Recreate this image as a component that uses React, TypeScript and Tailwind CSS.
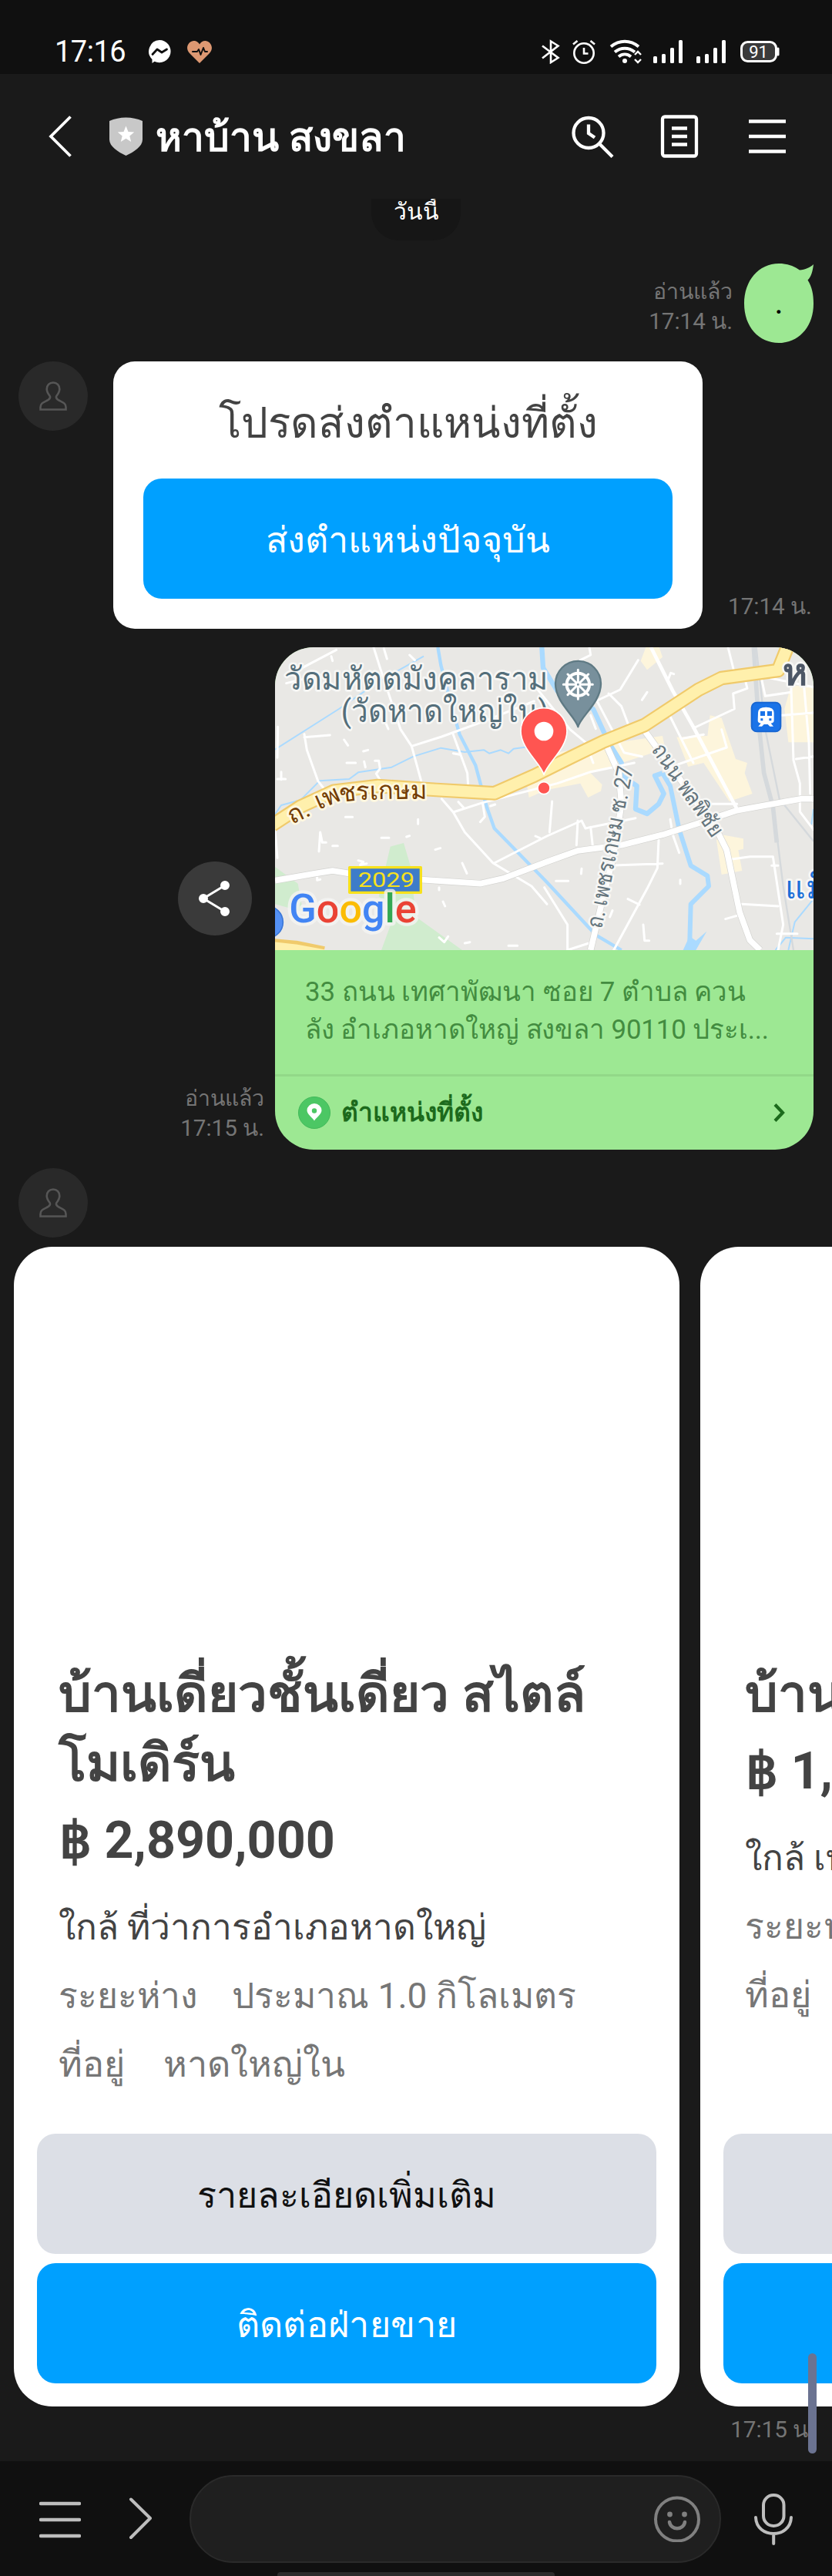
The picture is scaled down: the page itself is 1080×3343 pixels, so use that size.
import type { ReactNode } from "react";

function StatusBar() {
  return (
    <header className="flex h-[96px] items-center justify-between bg-[#101010] pt-[37px] pr-[68px] pl-[71px] text-white">
      <div className="flex items-center">
        <span className="w-[120px] text-[38px] leading-[40px] tracking-[-0.5px]">17:16</span>
        <svg className="h-8 w-8" viewBox="0 0 32 32">
          <path d="M16 1a14.6 14.6 0 1 1-6.500 27.700L6.500 31V26A14.600 14.600 0 0 1 16 1Z" fill="#fff" />
          <path d="m7 19.500 6-6.500 6 4 6.500-4" fill="none" stroke="#101010" strokeWidth="2.800" strokeLinecap="round" strokeLinejoin="round" />
        </svg>
        <svg className="ml-[19px] h-8 w-[34px]" viewBox="0 0 34 32">
          <path d="M17 31 4 18C-3 10 4 2 9.500 2c3.500 0 6 2 7.500 4.500C18.500 4 21 2 24.500 2 30 2 37 10 30 18Z" fill="#dd9872" />
          <path d="M8 16h6l2-3 2.500 7 3.500-9 2 5h3" fill="none" stroke="#101010" strokeWidth="2" strokeLinecap="round" strokeLinejoin="round" />
        </svg>
      </div>
      <svg className="h-8 w-[310px]" viewBox="0 0 310 32" fill="none" stroke="#fff" strokeWidth="2.600">
        <path d="M2 8.500 22.500 24 13 30V2.500l9.500 6L2 24.500" />
        <circle cx="56" cy="18" r="12.700" />
        <path d="M56 11v7.500h5.500M42 6.500l5.500-4.500M70 6.500 64.500 2" />
        <g strokeWidth="4">
          <path d="M91 9.500C102 .500 116 .500 127 9.500M96 16.500c8-6.500 18-6.500 26 0M101 22.500c5-4 11-4 16 0" />
        </g>
        <circle cx="109" cy="28" r="3" fill="#fff" stroke="none" />
        <path d="m122 20 4-4 4 4M122 26l4 4 4-4" strokeWidth="2.400" />
        <g fill="#fff" stroke="none">
          <rect x="146" y="22" width="5" height="9" rx="1.500" /><rect x="157" y="19" width="5" height="12" rx="1.500" /><rect x="168" y="11" width="5" height="20" rx="1.500" /><rect x="179" y="1" width="5" height="30" rx="1.500" />
          <rect x="202" y="22" width="5" height="9" rx="1.500" /><rect x="213" y="19" width="5" height="12" rx="1.500" /><rect x="224" y="11" width="5" height="20" rx="1.500" /><rect x="235" y="1" width="5" height="30" rx="1.500" />
        </g>
        <rect x="260.500" y="3.500" width="45" height="25" rx="8" fill="#3a3a3a" strokeWidth="3" />
        <path d="M308 12v8" strokeWidth="3" strokeLinecap="round" />
        <text x="282.500" y="24" textAnchor="middle" fontSize="22" fill="#fff" stroke="none">91</text>
      </svg>
    </header>
  );
}

function TitleBar() {
  return (
    <div className="flex h-[162px] items-center justify-between pr-[60px] pl-[62px] text-white">
      <div className="flex items-center">
        <svg className="h-[54px] w-8" viewBox="0 0 32 54" fill="none" stroke="#fff" strokeWidth="3.800">
          <path d="M29.500 1.500 4 27l25.500 25.500" />
        </svg>
        <svg className="ml-12 h-[50px] w-[43px]" viewBox="0 0 43 50">
          <path d="M0 5C13-1 30-1 43 5V29c0 9-11 16-21.500 21C11 45 0 38 0 29Z" fill="#c8c8c8" />
          <path d="m21.500 11.500 3 7.400 7.700.500-5.900 5 1.900 7.600-6.700-4.200-6.700 4.200 1.900-7.600-5.900-5 7.700-.500Z" fill="#fff" />
        </svg>
        <h1 className="ml-[17px] pt-[4px] text-[51.5px] leading-[60px] font-bold whitespace-nowrap">หาบ้าน สงขลา</h1>
      </div>
      <div className="flex items-center">
        <svg className="h-[60px] w-[56px]" viewBox="0 0 56 60" fill="none" stroke="#fff" strokeWidth="4.300">
          <circle cx="22" cy="25.500" r="19.500" />
          <path d="m36 39.500 17 17M22 14.500v11.500l8 5.500" />
        </svg>
        <svg className="ml-[59px] h-[60px] w-[50px]" viewBox="0 0 50 60" fill="none" stroke="#fff" strokeWidth="4.300">
          <rect x="3" y="4.500" width="44" height="51" rx="3" />
          <path d="M15 19.500h20M15 30h20M15 40.500h20" />
        </svg>
        <svg className="ml-[65px] h-[60px] w-12" viewBox="0 0 48 60" fill="none" stroke="#fff" strokeWidth="4.600">
          <path d="M0 10.500h48M0 30h48M0 49.500h48" />
        </svg>
      </div>
    </div>
  );
}

function Avatar() {
  return (
    <div className="flex h-[90px] w-[90px] shrink-0 items-center justify-center rounded-full bg-[#292929]">
      <svg className="h-[38px] w-9" viewBox="0 0 36 38" fill="none" stroke="#565656" strokeWidth="2.600">
        <path d="M18 1.500c-5 0-8.300 3.700-8.300 8.500 0 4 2 6.500 4 9 1 2-.500 4-3 5.500-6 3-9.200 4-9.200 9V36.500h33V33.500c0-5-3.200-6-9.200-9-2.500-1.500-4-3.500-3-5.500 2-2.500 4-5 4-9 0-4.800-3.300-8.500-8.300-8.500Z" />
      </svg>
    </div>
  );
}

function Meta({ read, time }: { read?: boolean; time: string }) {
  return (
    <div className="text-right text-[29.6px] leading-[38px] whitespace-nowrap text-[#757575]">
      {read && <div className="text-[28.5px]">อ่านแล้ว</div>}
      <div>{time}</div>
    </div>
  );
}

function ActionButton({ grey, children }: { grey?: boolean; children: ReactNode }) {
  return (
    <button
      className={`flex h-[156px] w-full items-center justify-center rounded-[24px] pt-[3px] leading-[60px] whitespace-nowrap ${
        grey ? "bg-[#dcdfe6] text-[46.7px] text-[#111]" : "bg-[#00a0ff] text-[46.7px] text-white"
      }`}
    >
      {children}
    </button>
  );
}

const HALO = { stroke: "#f7f7f5", strokeWidth: 16, paintOrder: "stroke" as const, strokeLinejoin: "round" as const };

function MapPreview() {
  return (
    <svg className="block h-[393px] w-[699px]" viewBox="51 30 2097 1179" fill="none" strokeLinejoin="round">
      <rect x="51" y="30" width="2097" height="1179" fill="#e9e8e5" />
      {/* parks */}
      <g fill="#d0ecce">
        <path d="M500 806 552 792 578 880 600 1080 780 1209H465L520 1060 455 1000Z" />
        <path d="M51 885 140 950 160 1060 51 1030Z" />
      </g>
      {/* commercial blocks */}
      <g fill="#fdf5dc">
        <path d="M1495 30h52l13 38-60 50-25-35ZM1150 440l130-25 280-40 10 50-290 95 45 45-5 25-50 25-30-55-130 25-70 30-10-60Z" />
        <path d="M1615 380 1735 375 1745 295 1790 305 1845 465 1890 480 1880 520 1910 600 1820 630 1720 480 1660 495Z" />
        <path d="M1790 760 1875 775 1875 815 1855 820 1870 900 1790 915 1770 780ZM2060 180 2148 180 2148 400 2050 400 2035 270Z" />
      </g>
      {/* water */}
      <g stroke="#aadaff">
        <path d="M685 30 697 100 742 270 770 370 832 490 875 650 905 735 1110 945 1300 1150 1400 1209" strokeWidth="13" />
        <path d="M1090 30 1095 110 1150 200 1290 270 1350 400 1400 480 1400 530 1460 570 1455 660 1500 678 1545 640 1565 600 1530 530 1560 520" strokeWidth="19" />
        <path d="M1560 520 1590 570 1625 740 1670 880 1735 920 1740 960 1670 1030 1665 1209" strokeWidth="18" />
        <path d="M51 428 300 270 460 160 630 65M51 680 75 645 150 625 225 550 340 543 375 517 505 497 590 455 697 422 790 438 865 430 885 443 930 430 960 443 980 425 1040 417M2148 1010 2075 1100 2050 1209M2148 1165 2040 1160 2000 1209M2148 660 2140 720" strokeWidth="6" />
      </g>
      <path d="M1640 1209 1665 1155 1690 1172 1732 1136 1690 1209Z" fill="#aadaff" />
      {/* railway */}
      <g stroke="#d5d9dc">
        <path d="M1915 30 1935 330 1955 520 1990 650 2005 790" strokeWidth="17" />
        <path d="M1925 30 1960 350 2015 620 2148 785M1990 640 2030 960 2070 1209" strokeWidth="7" />
      </g>
      {/* minor streets */}
      <g stroke="#fff" strokeWidth="9" strokeLinecap="round">
        <path d="M51 100 68 30M62 340 60 460M51 740 60 850M435 30 460 110 540 350 583 415 620 550M583 415 700 378 860 320 1060 240M165 368 175 430 218 550 245 585M165 380 265 372M745 370 800 520 803 570M700 620 745 672 790 750 900 870 1050 960 1110 1030M745 672 860 635 1150 560 1280 515 1450 480M905 870 1110 765 1245 705 1260 735 1455 695M860 640 868 690 850 710M1130 630 1120 750M100 140 290 40M95 170 260 130" />
        <path d="M1240 80 1280 60 1275 30M1465 80 1395 195 1300 240M1070 190 1200 350 1260 400 1290 480M1300 230 1410 440 1480 455M1350 210 1400 260 1430 340M1520 400 1690 640 1850 640M1590 300 1680 480M1680 345 1840 270 1835 210 1890 190 1880 150M1640 385 1720 370M1580 500 1810 420 1790 350M1815 30 1845 150M1945 150 1960 220 2060 205M1980 150 2148 185M2060 160 2070 470 2095 560 2095 670 2148 740M2110 170 2130 400 2135 600M2025 295 2148 285M2080 465 2148 455M1230 705 1225 800M1280 730 1290 820M1545 780 1540 890 1500 970 1370 1209M1350 880 1560 872M1100 965 1190 1110 1190 1209 1280 1180M1830 855 1900 845 1990 845 2030 1110 2010 1209M1870 1030 2010 1038M1805 1088 1860 1072M1425 1010 1470 1032M1985 880 2010 880M2005 1145 2085 1145M1485 1110 1490 1172 1508 1172M1590 700 1600 760 1625 830" />
        <path d="M330 480h35M398 475l5 22M440 472h15l5 30-15 20 15 25M395 435l18-5M320 390l15 22M75 515v30M60 543h32M222 825l5-75 8 40h15M275 803h20M325 691h28M465 772h30M675 818 695 812M780 870l18 40M608 700v18M375 860l20 5-12 12 25-5M563 768l12-4M690 965v10M705 1020l8 18M690 1160l20 18 15-22M790 1182l20-4M475 35l12 40M575 60l20 20M270 65l5 18M480 320l12 28M745 443 770 448M765 632l20 22M890 648l18-6M1245 892l-2 20M1145 940h48M1629 935v16M1240 240l-10 50M1480 235l20-30M1580 160l12-30 12 4M1280 295l20 52M1355 1080l10-25M1065 765l18 8M960 1192h35M225 1022l45-6M215 925v12l12-3" />
      </g>
      {/* secondary roads */}
      <g stroke="#d3d3d0" strokeWidth="27">
        <path d="M51 938 200 912 275 900 400 920 850 950 940 930 1110 865 1230 822 1400 800 1560 760 1700 715 1850 665 2100 620 2148 620" />
        <path d="M1345 420 1390 520 1400 640 1370 840 1320 1040 1280 1209M1490 355 1640 560 1780 760 1810 820 1860 1060 1900 1170 1940 1209" />
      </g>
      <g stroke="#fff" strokeWidth="23">
        <path d="M51 938 200 912 275 900 400 920 850 950 940 930 1110 865 1230 822 1400 800 1560 760 1700 715 1850 665 2100 620 2148 620" />
        <path d="M1345 420 1390 520 1400 640 1370 840 1320 1040 1280 1209M1490 355 1640 560 1780 760 1810 820 1860 1060 1900 1170 1940 1209" />
        <path d="M1515 30 1600 200 1680 340 1850 660" strokeWidth="14" />
      </g>
      {/* highway */}
      <g>
        <path d="M40 722 150 650 280 590 450 570 680 585 905 598 1060 530 1200 460 1330 397 1490 333 1700 195 1790 150 2010 120 2050 20M20 1190 130 1200 240 1222" stroke="#f0ca6b" strokeWidth="56" />
        <path d="M40 722 150 650 280 590 450 570 680 585 905 598 1060 530 1200 460 1330 397 1490 333 1700 195 1790 150 2010 120 2050 20M20 1196 130 1208 240 1228" stroke="#fff0ac" strokeWidth="43" />
      </g>
      <circle cx="20" cy="1100" r="62" fill="#5491f5" stroke="#3b78d8" strokeWidth="5" />
      {/* place labels */}
      <g fill="#546e7a" {...HALO} fontSize="122">
        <text x="88" y="196" textLength="1028" lengthAdjust="spacingAndGlyphs">วัดมหัตตมังคลาราม</text>
        <text x="308" y="322" textLength="808" lengthAdjust="spacingAndGlyphs">(วัดหาดใหญ่ใน)</text>
      </g>
      <g fill="#733c00" {...HALO} stroke="#fff8e0" fontSize="98">
        <text transform="translate(118 720) rotate(-26)">ถ.</text>
        <text transform="translate(222 664) rotate(-24)">เพ</text>
        <text transform="translate(303 632) rotate(-6)">ช</text>
        <text transform="translate(366 624) rotate(-1)">รเกษม</text>
      </g>
      <g fill="#64747c" {...HALO} fontSize="88">
        <text transform="translate(1324 1128) rotate(-79)" textLength="640" lengthAdjust="spacingAndGlyphs">ถ. เพชรเกษม ซ. 27</text>
        <text transform="translate(1514 430) rotate(55)" textLength="420" lengthAdjust="spacingAndGlyphs">ถนน พลพิชัย</text>
      </g>
      <text x="2028" y="176" fontSize="146" fontWeight="700" fill="#4d5766" {...HALO}>ห</text>
      <text x="2038" y="1008" fontSize="124" fill="#1b6fd8" {...HALO}>แม็</text>
      {/* temple marker */}
      <path d="M1231 340C1222 300 1143 245 1143 172A88 88 0 0 1 1320 172C1320 245 1240 300 1231 340Z" fill="#78909c" stroke="#5f7a84" strokeWidth="7" />
      <g stroke="#fff" strokeWidth="9" strokeLinecap="round">
        <circle cx="1231" cy="175" r="44" strokeWidth="12" />
        <path d="M1231 118v114M1174 175h114M1191 135l80 80M1271 135l-80 80" />
        <circle cx="1231" cy="175" r="8" fill="#78909c" strokeWidth="7" />
      </g>
      {/* station marker */}
      <rect x="1907" y="245" width="113" height="113" rx="20" fill="#1a73e8" stroke="#1967d2" strokeWidth="6" />
      <path d="M1932 285q0-22 31-22t31 22v30q0 10-12 11l10 12h-14l-8-8h-15l-8 8h-14l10-12q-12-1-12-11Z" fill="#fff" />
      <path d="M1941 279h18v18h-18ZM1968 279h18v18h-18ZM1942 307h9v9h-9ZM1975 307h9v9h-9Z" fill="#1a73e8" />
      {/* route shield */}
      <rect x="341" y="887" width="278" height="98" fill="#3d7cc9" stroke="#f7e11c" strokeWidth="10" />
      <text x="484" y="963" fontSize="80" fill="#f7e11c" textAnchor="middle" textLength="220" lengthAdjust="spacingAndGlyphs">2029</text>
      {/* wordmark */}
      <g fontSize="156" fontWeight="500" stroke="#f4f4f2" strokeOpacity="0.8" strokeWidth="26" paintOrder="stroke" strokeLinejoin="round">
        <text x="106" y="1101" textLength="496" lengthAdjust="spacingAndGlyphs">
          <tspan fill="#4285f4">G</tspan><tspan fill="#ea4335">o</tspan><tspan fill="#fbbc05">o</tspan><tspan fill="#4285f4">g</tspan><tspan fill="#34a853">l</tspan><tspan fill="#ea4335">e</tspan>
        </text>
      </g>
      {/* pin */}
      <path d="M1098 526C1085 480 1008 425 1008 356A90 90 0 0 1 1188 356C1188 425 1111 480 1098 526Z" fill="#ff5551" stroke="#fff" strokeWidth="5" />
      <circle cx="1098" cy="357" r="37" fill="#fff" />
      <circle cx="1098" cy="578" r="24" fill="#ff5551" stroke="#fff" strokeWidth="5" />
    </svg>
  );
}

function LocationMessage() {
  return (
    <div className="mt-6 flex h-[652px] justify-end pr-6">
      <div className="flex flex-col items-end justify-between pt-[278px] pb-[9px]">
        <div className="mr-[30px] flex h-24 w-24 items-center justify-center rounded-full bg-[#3a3a3a]">
          <svg className="h-12 w-12" viewBox="0 0 48 48" fill="#fff" stroke="#fff" strokeWidth="3">
            <path d="M37 7 9 24l28 17" fill="none" />
            <circle cx="37" cy="7" r="4.500" /><circle cx="9" cy="24" r="4.500" /><circle cx="37" cy="41" r="4.500" />
          </svg>
        </div>
        <div className="mr-[14px]"><Meta read time="17:15 น." /></div>
      </div>
      <div className="w-[699px] overflow-hidden rounded-[50px] bg-[#9de893]">
        <MapPreview />
        <p className="h-[161px] pt-[30px] pl-[39px] text-[34.800px] leading-[49px] whitespace-nowrap text-[#438c40]">
          33 ถนน เทศาพัฒนา ซอย 7 ตำบล ควน
          <br />
          <span className="tracking-[-0.12px]">ลัง อำเภอหาดใหญ่ สงขลา 90110 ประเ...</span>
        </p>
        <div className="flex h-[98px] items-center border-t-[3px] border-[#92d888] pr-[37px] pb-[2px] pl-[30px] text-[#1c6a1c]">
          <svg className="h-[42px] w-[42px]" viewBox="0 0 42 42">
            <circle cx="21" cy="21" r="20.500" fill="#4cc764" stroke="#42b95a" />
            <path d="M21 31.500C19 28 11.500 23 11.500 18a9.500 9 0 0 1 19 0C30.500 23 23 28 21 31.500Z" fill="#fff" />
            <circle cx="21" cy="18.500" r="3.200" fill="#4cc764" />
          </svg>
          <span className="ml-[14px] grow text-[33.500px] leading-[44px] font-bold">ตำแหน่งที่ตั้ง</span>
          <svg className="h-6 w-4" viewBox="0 0 16 24" fill="none" stroke="currentColor" strokeWidth="4.200">
            <path d="m3 1.500 10 10.500L3 22.500" />
          </svg>
        </div>
      </div>
    </div>
  );
}

type Listing = { title: string[]; price: string; near: string; distance: string; area: string };

const LISTINGS: Listing[] = [
  { title: ["บ้านเดี่ยวชั้นเดี่ยว สไตล์", "โมเดิร์น"], price: "฿ 2,890,000", near: "ใกล้ ที่ว่าการอำเภอหาดใหญ่", distance: "ประมาณ 1.0 กิโลเมตร", area: "หาดใหญ่ใน" },
  { title: ["บ้านเดี่ยว"], price: "฿ 1,890,000", near: "ใกล้ เทศบาล", distance: "ประมาณ", area: "หาดใหญ่" },
];

function ListingCard({ item }: { item: Listing }) {
  return (
    <article className="flex h-[1505px] w-[864px] shrink-0 flex-col rounded-[50px] bg-white px-[30px] pt-[535px] pb-[30px]">
      <div className="pl-[28px] whitespace-nowrap text-[#434343]">
        <h2 className="text-[67.200px] leading-[90px] font-bold">
          {item.title.map((line) => (
            <span key={line} className="block">{line}</span>
          ))}
        </h2>
        <p className="mt-[10px] pl-[1px] text-[66.400px] leading-[90px] font-bold">{item.price}</p>
        <p className="mt-[24px] text-[46px] leading-[89px]">{item.near}</p>
        <p className="flex gap-[44px] text-[46.200px] leading-[89px] text-[#767676]"><span>ระยะห่าง</span><span>{item.distance}</span></p>
        <p className="flex gap-[50px] text-[46.800px] leading-[89px] text-[#767676]"><span>ที่อยู่</span><span>{item.area}</span></p>
      </div>
      <div className="mt-auto flex flex-col gap-3">
        <ActionButton grey>รายละเอียดเพิ่มเติม</ActionButton>
        <ActionButton><span className="tracking-[0.4px]">ติดต่อฝ่ายขาย</span></ActionButton>
      </div>
    </article>
  );
}

function InputBar() {
  return (
    <footer className="relative flex h-[149px] items-center bg-[#101010] pr-[50px] pl-[51px]">
      <svg className="h-[50px] w-[54px]" viewBox="0 0 54 50" stroke="#bdbdbd" strokeWidth="4.600" strokeLinecap="round">
        <path d="M2 5h50M2 26h50M2 47h50" />
      </svg>
      <svg className="ml-[62px] h-[56px] w-8" viewBox="0 0 32 56" fill="none" stroke="#bdbdbd" strokeWidth="4" strokeLinecap="round" strokeLinejoin="round">
        <path d="M3 2.500 28 27 3 52" />
      </svg>
      <div className="ml-[47px] flex h-[114px] w-[690px] items-center justify-end rounded-[57px] border-2 border-[#2a2a2a] bg-[#1f1f1f] pr-[25px]">
        <svg className="h-[60px] w-[60px]" viewBox="0 0 60 60" fill="none" stroke="#808080" strokeWidth="4">
          <circle cx="30" cy="30.500" r="28" />
          <path d="M20 34c2 11 18 11 20 0" strokeWidth="4.500" strokeLinecap="round" />
          <circle cx="20.500" cy="24" r="3.400" fill="#808080" stroke="none" /><circle cx="39.500" cy="24" r="3.400" fill="#808080" stroke="none" />
        </svg>
      </div>
      <svg className="ml-[43px] h-[68px] w-[50px]" viewBox="0 0 50 68" fill="none" stroke="#bdbdbd" strokeWidth="4" strokeLinecap="round">
        <rect x="12" y="3" width="26.500" height="40" rx="13" />
        <path d="M2 32c1 28 45 28 46 0M25.200 54v12" />
      </svg>
      <div className="absolute bottom-0 left-[360px] h-[5px] w-[360px] rounded-t-[4px] bg-[#2b2b2b]" />
    </footer>
  );
}

export default function App() {
  return (
    <div className="flex h-[3343px] w-[1080px] flex-col overflow-hidden bg-[#1a1a1a] font-[Roboto,'Noto_Sans',sans-serif]">
      <StatusBar />
      <TitleBar />
      <main className="relative h-[2936px] overflow-hidden">
        <div className="mx-auto h-[54px] w-[116px] overflow-hidden rounded-b-[36px] bg-[#161616] text-center text-[30px] leading-[33px] text-white">วันนี้</div>
        <div className="mt-[30px] flex h-[103px] items-end justify-end pr-6">
          <div className="mr-[15px] pb-[9px]"><Meta read time="17:14 น." /></div>
          <div className="relative h-[103px] w-[90px]">
            <svg className="absolute inset-0 h-full w-full" viewBox="0 0 90 103" fill="#9de893">
              <path d="M45 0C56 0 65 3 72 8.500C79 8 86 5 90 1C89 10 87 17 82.500 21.500C88 30 90 40 90 52C90 82 71 103 45 103S0 82 0 52S19 0 45 0Z" />
            </svg>
            <span className="relative block pt-[20px] text-center text-[44px] leading-[60px] text-black">.</span>
          </div>
        </div>
        <div className="mt-6 flex h-[347px] pl-6">
          <Avatar />
          <div className="ml-[33px] flex w-[765px] flex-col rounded-[28px] bg-white px-[39px] pt-[40px]">
            <p className="mb-[32px] text-center text-[54.900px] leading-[80px] text-[#434343]">โปรดส่งตำแหน่งที่ตั้ง</p>
            <ActionButton>ส่งตำแหน่งปัจจุบัน</ActionButton>
          </div>
          <div className="ml-[33px] self-end pb-[10px]"><Meta time="17:14 น." /></div>
        </div>
        <LocationMessage />
        <div className="mt-6 pl-6"><Avatar /></div>
        <div className="mt-3 flex gap-[27px] pl-[18px]">
          {LISTINGS.map((item) => <ListingCard key={item.price} item={item} />)}
        </div>
        <div className="mt-[11px] flex justify-end pr-[23px]"><Meta time="17:15 น." /></div>
        <div className="absolute right-[20px] bottom-[10px] h-[130px] w-[11px] rounded-full bg-[#6b7391]" />
      </main>
      <InputBar />
    </div>
  );
}
